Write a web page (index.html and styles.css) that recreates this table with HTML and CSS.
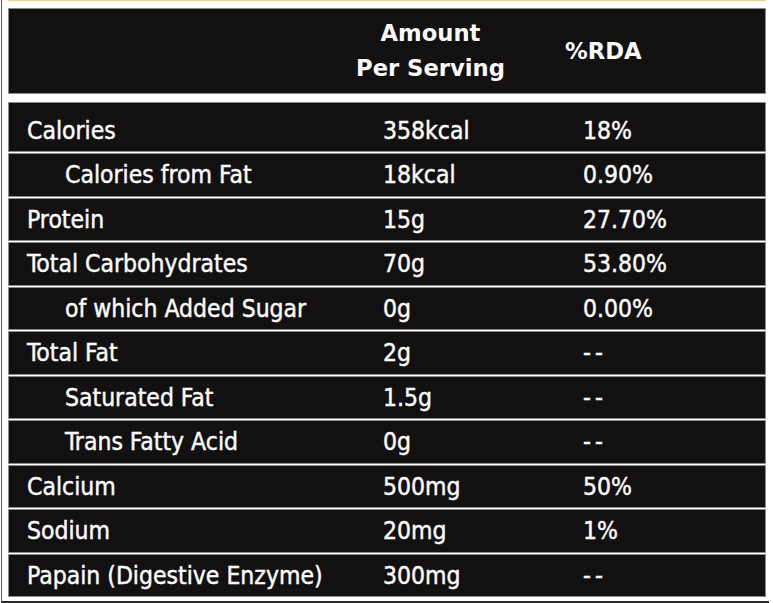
FILE: index.html
```html
<!DOCTYPE html>
<html lang="en">
<head>
<meta charset="utf-8">
<title>Nutrition Facts</title>
<link rel="stylesheet" href="styles.css">
</head>
<body>
<div class="frame">
  <div class="topline"></div>
  <div class="table">
    <div class="head">
      <div></div>
      <div class="h-amount">Amount<br>Per Serving</div>
      <div class="h-rda">%RDA</div>
    </div>
    <div class="rows">
      <div class="row first"><span>Calories</span><span>358kcal</span><span>18%</span></div>
      <div class="row sub"><span>Calories from Fat</span><span>18kcal</span><span>0.90%</span></div>
      <div class="row"><span>Protein</span><span>15g</span><span>27.70%</span></div>
      <div class="row"><span>Total Carbohydrates</span><span>70g</span><span>53.80%</span></div>
      <div class="row sub"><span>of which Added Sugar</span><span>0g</span><span>0.00%</span></div>
      <div class="row"><span>Total Fat</span><span>2g</span><span class="dash">--</span></div>
      <div class="row sub"><span>Saturated Fat</span><span>1.5g</span><span class="dash">--</span></div>
      <div class="row sub"><span>Trans Fatty Acid</span><span>0g</span><span class="dash">--</span></div>
      <div class="row"><span>Calcium</span><span>500mg</span><span>50%</span></div>
      <div class="row"><span>Sodium</span><span>20mg</span><span>1%</span></div>
      <div class="row"><span>Papain (Digestive Enzyme)</span><span>300mg</span><span class="dash">--</span></div>
    </div>
  </div>
</div>
</body>
</html>
```
FILE: styles.css
```css
* { box-sizing: border-box; }
html, body { margin: 0; padding: 0; background: #ffffff; }

.frame {
  margin-left: 1px;
  width: 768px;
  height: 603px;
  border-left: 1px solid #5a5a5a;
  border-bottom: 2px solid #2a2a2a;
  padding-left: 6px;
}

.topline {
  width: 758px;
  height: 1px;
  background: #eed37f;
  margin-bottom: 7px;
}

.table { width: 758px; }

.head {
  height: 86px;
  background: #121010;
  border: 1px solid #8c8c8c;
  display: grid;
  grid-template-columns: 347px 209px 1fr;
  align-items: center;
  color: #fafafa;
  font-family: "DejaVu Sans", "Liberation Sans", sans-serif;
  font-weight: 700;
  font-size: 22.7px;
  margin-bottom: 8px;
}

.h-amount {
  justify-self: start;
  text-align: center;
  line-height: 35px;
  white-space: nowrap;
}

.h-rda { line-height: 35px; white-space: nowrap; }

.rows {
  display: flex;
  flex-direction: column;
  gap: 1px;
}

.row {
  height: 43.5px;
  background: #121010;
  border: 1px solid #8c8c8c;
  display: grid;
  grid-template-columns: 356px 200px 1fr;
  align-items: center;
  padding-left: 18px;
  color: #fafafa;
  font-family: "DejaVu Sans Condensed", "DejaVu Sans", sans-serif;
  font-stretch: condensed;
  font-size: 24.5px;
  white-space: nowrap;
  -webkit-text-stroke: 0.45px #fafafa;
}

.row.first {
  height: 50px;
  padding-top: 6px;
}

.row.sub span:first-child { padding-left: 38px; }

.dash { letter-spacing: 4px; }
```
